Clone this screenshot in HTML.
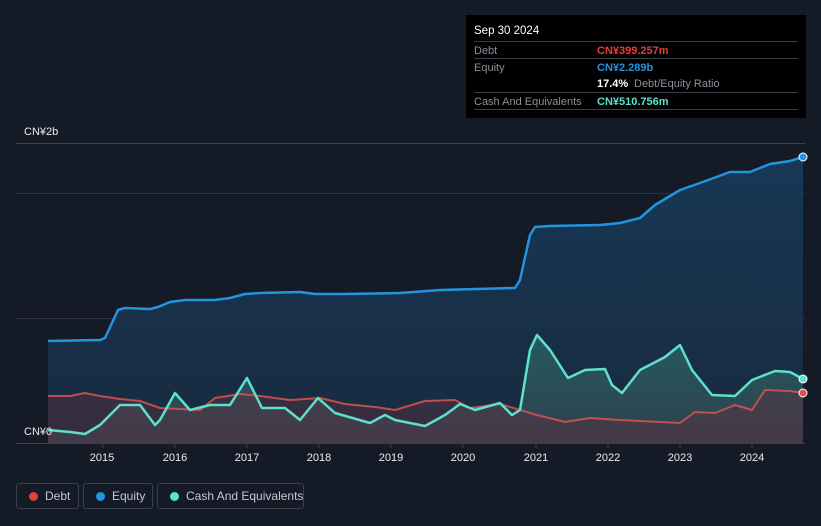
<!DOCTYPE html>
<html><head><style>
body{margin:0;width:821px;height:526px;background:#151b26;font-family:"Liberation Sans",sans-serif;overflow:hidden;position:relative}
.tt{position:absolute;left:466px;top:15px;width:340px;height:103px;background:#000;font-size:11px;color:#8a8f98}
.tt .t{position:absolute;left:8px;top:10px;color:#fff;font-size:11.5px}
.row{position:absolute;left:8px;width:324px;border-top:1px solid #3a3d44;height:17px}
.row span{position:absolute;top:3px;white-space:nowrap}
.leg{position:absolute;top:483px;height:26px;border:1px solid #3a404c;border-radius:3px;color:#c4c8ce;font-size:12px;box-sizing:border-box;line-height:24px;white-space:nowrap}
.leg i{position:absolute;left:12px;top:8px;width:9px;height:9px;border-radius:50%}
.leg span{position:absolute;left:28px}
</style></head><body>
<svg width="821" height="526" style="position:absolute;left:0;top:0">
<defs>
<linearGradient id="ge" x1="0" y1="0" x2="0" y2="1"><stop offset="0" stop-color="#173d5f" stop-opacity=".85"/><stop offset="1" stop-color="#1a3550" stop-opacity=".6"/></linearGradient>
<linearGradient id="gc" x1="0" y1="0" x2="0" y2="1"><stop offset="0" stop-color="#2a6d68" stop-opacity=".7"/><stop offset="1" stop-color="#3a4a55" stop-opacity=".7"/></linearGradient>
</defs>
<line x1="16" y1="143.5" x2="805" y2="143.5" stroke="#3c4048"/>
<line x1="16" y1="193.5" x2="805" y2="193.5" stroke="#2c313a"/>
<line x1="16" y1="318.5" x2="805" y2="318.5" stroke="#2c313a"/>
<path d="M48,341 L100,340 L105,338 L118,310 L125,308 L150,309 L158,307 L170,302 L185,300 L215,300 L230,298 L245,294 L260,293 L300,292 L315,294 L345,294 L400,293 L440,290 L515,288 L520,280 L530,235 L535,227 L550,226 L600,225 L620,223 L640,218 L655,205 L680,190 L700,183 L730,172 L750,172 L770,164 L790,161 L803,157 L803,443 L48,443Z" fill="url(#ge)"/>
<path d="M48,430 L70,432 L85,434 L100,425 L120,405 L140,405 L155,425 L160,420 L175,393 L190,410 L210,405 L230,405 L247,378 L262,408 L285,408 L300,420 L318,398 L335,413 L370,423 L385,415 L395,420 L425,426 L445,415 L460,404 L475,410 L500,403 L512,415 L520,410 L530,350 L537,335 L550,350 L568,378 L585,370 L605,369 L612,385 L622,393 L640,370 L665,357 L680,345 L692,370 L712,395 L735,396 L752,380 L775,371 L790,372 L803,379 L803,443 L48,443Z" fill="url(#gc)"/>
<path d="M48,396 L70,396 L85,393 L100,396 L120,399 L140,401 L160,408 L200,410 L215,398 L240,394 L260,396 L290,400 L320,398 L345,404 L375,407 L395,410 L425,401 L455,400 L470,408 L500,404 L537,415 L565,422 L590,418 L620,420 L660,422 L680,423 L695,412 L715,413 L735,405 L752,410 L765,390 L790,391 L803,393 L803,443 L48,443Z" fill="#5a3040" fill-opacity=".45"/>
<path d="M48,341 L100,340 L105,338 L118,310 L125,308 L150,309 L158,307 L170,302 L185,300 L215,300 L230,298 L245,294 L260,293 L300,292 L315,294 L345,294 L400,293 L440,290 L515,288 L520,280 L530,235 L535,227 L550,226 L600,225 L620,223 L640,218 L655,205 L680,190 L700,183 L730,172 L750,172 L770,164 L790,161 L803,157" fill="none" stroke="#2394e0" stroke-width="2.5" stroke-linejoin="round"/>
<path d="M48,396 L70,396 L85,393 L100,396 L120,399 L140,401 L160,408 L200,410 L215,398 L240,394 L260,396 L290,400 L320,398 L345,404 L375,407 L395,410 L425,401 L455,400 L470,408 L500,404 L537,415 L565,422 L590,418 L620,420 L660,422 L680,423 L695,412 L715,413 L735,405 L752,410 L765,390 L790,391 L803,393" fill="none" stroke="#d9534f" stroke-width="2" stroke-linejoin="round" opacity=".85"/>
<path d="M48,430 L70,432 L85,434 L100,425 L120,405 L140,405 L155,425 L160,420 L175,393 L190,410 L210,405 L230,405 L247,378 L262,408 L285,408 L300,420 L318,398 L335,413 L370,423 L385,415 L395,420 L425,426 L445,415 L460,404 L475,410 L500,403 L512,415 L520,410 L530,350 L537,335 L550,350 L568,378 L585,370 L605,369 L612,385 L622,393 L640,370 L665,357 L680,345 L692,370 L712,395 L735,396 L752,380 L775,371 L790,372 L803,379" fill="none" stroke="#5ee0cc" stroke-width="2.5" stroke-linejoin="round"/>
<line x1="16" y1="443.5" x2="805" y2="443.5" stroke="#3c4048"/>
<g stroke="#3c4048"><line x1="103" y1="443" x2="103" y2="448"/><line x1="175" y1="443" x2="175" y2="448"/><line x1="247" y1="443" x2="247" y2="448"/><line x1="319" y1="443" x2="319" y2="448"/><line x1="391" y1="443" x2="391" y2="448"/><line x1="463" y1="443" x2="463" y2="448"/><line x1="536" y1="443" x2="536" y2="448"/><line x1="608" y1="443" x2="608" y2="448"/><line x1="680" y1="443" x2="680" y2="448"/><line x1="752" y1="443" x2="752" y2="448"/></g>
<circle cx="803" cy="157" r="4" fill="#2394e0" stroke="#fff" stroke-width="1"/>
<circle cx="803" cy="393" r="4" fill="#d9534f" stroke="#fff" stroke-width="1"/>
<circle cx="803" cy="379" r="4" fill="#5ee0cc" stroke="#fff" stroke-width="1"/>
<g fill="#e8eaed" font-size="11" font-family="Liberation Sans" text-anchor="middle">
<text x="102" y="461">2015</text><text x="175" y="461">2016</text><text x="247" y="461">2017</text><text x="319" y="461">2018</text><text x="391" y="461">2019</text><text x="463" y="461">2020</text><text x="536" y="461">2021</text><text x="608" y="461">2022</text><text x="680" y="461">2023</text><text x="752" y="461">2024</text>
</g>
<g fill="#e8eaed" font-size="11" font-family="Liberation Sans">
<text x="24" y="135">CN¥2b</text><text x="24" y="435">CN¥0</text>
</g>
</svg>
<div class="tt">
<div class="t">Sep 30 2024</div>
<div class="row" style="top:26px"><span>Debt</span><span style="left:123px;color:#e0403c;font-weight:bold">CN¥399.257m</span></div>
<div class="row" style="top:43px"><span>Equity</span><span style="left:123px;color:#2394e0;font-weight:bold">CN¥2.289b</span></div>
<div class="row" style="top:60px;border-top:none"><span style="left:123px;color:#fff;font-weight:bold">17.4%</span><span style="left:160px">Debt/Equity Ratio</span></div>
<div class="row" style="top:77px"><span>Cash And Equivalents</span><span style="left:123px;color:#5ee0cc;font-weight:bold">CN¥510.756m</span></div>
<div class="row" style="top:94px;height:0"></div>
</div>
<div class="leg" style="left:16px;width:63px"><i style="background:#e0403c"></i><span>Debt</span></div>
<div class="leg" style="left:83px;width:70px"><i style="background:#2394e0"></i><span>Equity</span></div>
<div class="leg" style="left:157px;width:147px"><i style="background:#5ee0cc"></i><span style="left:28px">Cash And Equivalents</span></div>
</body></html>
